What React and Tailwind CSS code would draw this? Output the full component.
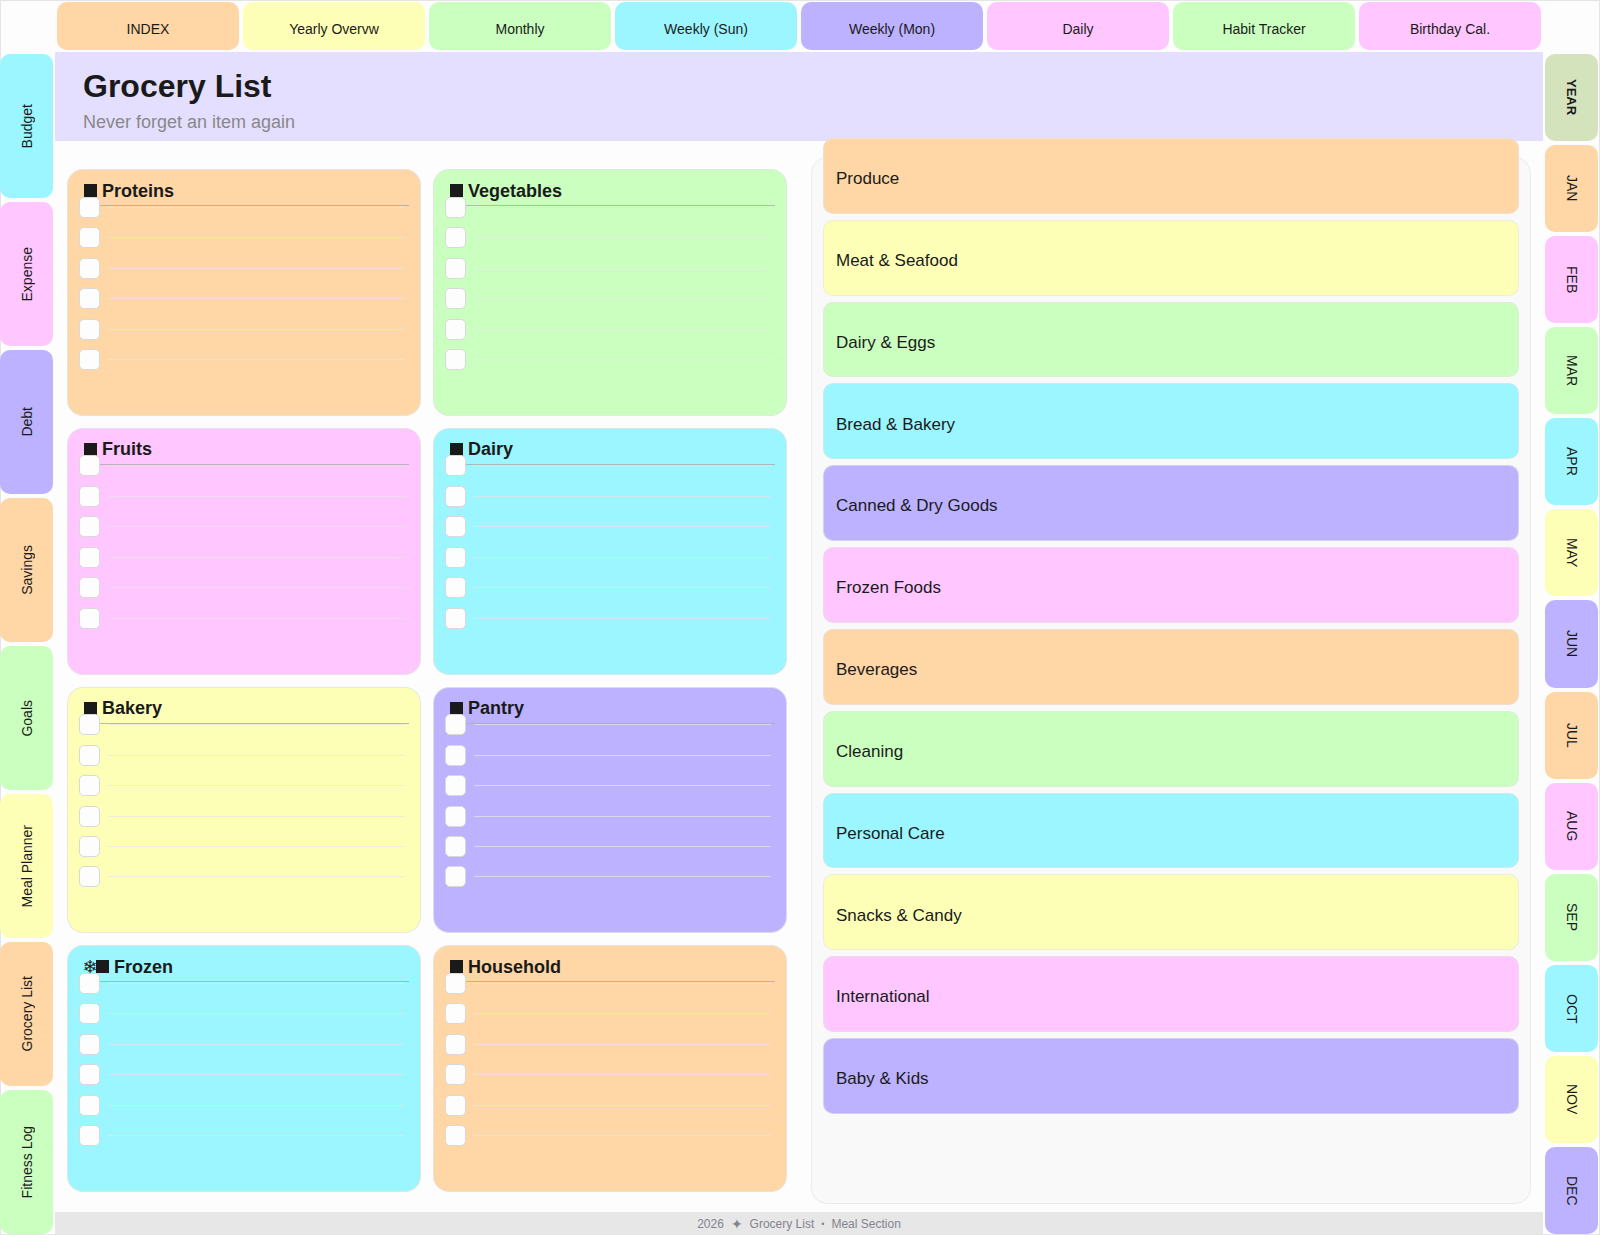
import { useState } from 'react';
import clsx from 'clsx';

const topTabs = [
  { label: 'INDEX', color: 'bg-[#ffd6a5]' },
  { label: 'Yearly Overvw', color: 'bg-[#fdffb6]' },
  { label: 'Monthly', color: 'bg-[#caffbf]' },
  { label: 'Weekly (Sun)', color: 'bg-[#9bf6ff]' },
  { label: 'Weekly (Mon)', color: 'bg-[#bdb2ff]' },
  { label: 'Daily', color: 'bg-[#ffc6ff]' },
  { label: 'Habit Tracker', color: 'bg-[#caffbf]' },
  { label: 'Birthday Cal.', color: 'bg-[#ffc6ff]' },
];

const sectionTabs = [
  { label: 'Budget', color: 'bg-[#9bf6ff]' },
  { label: 'Expense', color: 'bg-[#ffc6ff]' },
  { label: 'Debt', color: 'bg-[#bdb2ff]' },
  { label: 'Savings', color: 'bg-[#ffd6a5]' },
  { label: 'Goals', color: 'bg-[#caffbf]' },
  { label: 'Meal Planner', color: 'bg-[#fdffb6]' },
  { label: 'Grocery List', color: 'bg-[#ffd6a5]' },
  { label: 'Fitness Log', color: 'bg-[#caffbf]' },
];

const monthTabs = [
  { label: 'YEAR', color: 'bg-[#d5e3bd]', bold: true },
  { label: 'JAN', color: 'bg-[#ffd6a5]' },
  { label: 'FEB', color: 'bg-[#ffc6ff]' },
  { label: 'MAR', color: 'bg-[#caffbf]' },
  { label: 'APR', color: 'bg-[#9bf6ff]' },
  { label: 'MAY', color: 'bg-[#fdffb6]' },
  { label: 'JUN', color: 'bg-[#bdb2ff]' },
  { label: 'JUL', color: 'bg-[#ffd6a5]' },
  { label: 'AUG', color: 'bg-[#ffc6ff]' },
  { label: 'SEP', color: 'bg-[#caffbf]' },
  { label: 'OCT', color: 'bg-[#9bf6ff]' },
  { label: 'NOV', color: 'bg-[#fdffb6]' },
  { label: 'DEC', color: 'bg-[#bdb2ff]' },
];

const lists = [
  { name: 'Proteins', color: 'bg-[#ffd6a5]' },
  { name: 'Vegetables', color: 'bg-[#caffbf]' },
  { name: 'Fruits', color: 'bg-[#ffc6ff]' },
  { name: 'Dairy', color: 'bg-[#9bf6ff]' },
  { name: 'Bakery', color: 'bg-[#fdffb6]' },
  { name: 'Pantry', color: 'bg-[#bdb2ff]' },
  { name: 'Frozen', color: 'bg-[#9bf6ff]', icon: '❄' },
  { name: 'Household', color: 'bg-[#ffd6a5]' },
];

const aisles = [
  { name: 'Produce', color: 'bg-[#ffd6a5]' },
  { name: 'Meat & Seafood', color: 'bg-[#fdffb6]' },
  { name: 'Dairy & Eggs', color: 'bg-[#caffbf]' },
  { name: 'Bread & Bakery', color: 'bg-[#9bf6ff]' },
  { name: 'Canned & Dry Goods', color: 'bg-[#bdb2ff]' },
  { name: 'Frozen Foods', color: 'bg-[#ffc6ff]' },
  { name: 'Beverages', color: 'bg-[#ffd6a5]' },
  { name: 'Cleaning', color: 'bg-[#caffbf]' },
  { name: 'Personal Care', color: 'bg-[#9bf6ff]' },
  { name: 'Snacks & Candy', color: 'bg-[#fdffb6]' },
  { name: 'International', color: 'bg-[#ffc6ff]' },
  { name: 'Baby & Kids', color: 'bg-[#bdb2ff]' },
];

const ROWS = [0, 1, 2, 3, 4, 5];

function SideTabs({ tabs, label, flipped }) {
  return (
    <nav aria-label={label} className="flex w-[53px] shrink-0 flex-col gap-1 pt-0.5">
      {tabs.map((tab) => (
        <a
          key={tab.label}
          href="#"
          className={clsx('flex flex-1 items-center justify-center rounded-[10px]', tab.color)}
        >
          <span
            className={clsx(
              '[writing-mode:vertical-rl]',
              flipped && 'rotate-180',
              tab.bold ? 'text-[13px] font-bold' : 'text-sm'
            )}
          >
            {tab.label}
          </span>
        </a>
      ))}
    </nav>
  );
}

function ListCard({ name, color, icon }) {
  const [checked, setChecked] = useState({});

  return (
    <section className={clsx('flex flex-col rounded-2xl border border-[#e5e5e5]/80 pb-10', color)}>
      <h2 className="ml-4 mr-[11px] flex h-9 items-center border-b border-[#aaa]/80 pt-1.5 text-lg font-bold">
        {icon && (
          <span aria-hidden="true" className="flex w-3 justify-center font-['DejaVu_Sans'] text-lg font-normal">
            {icon}
          </span>
        )}
        <span aria-hidden="true" className="mr-[5px] size-[13px] bg-[#1a1a1a]" />
        {name}
      </h2>
      <ul className="-mt-3.5 flex flex-1 flex-col">
        {ROWS.map((row) => (
          <li key={row} className="flex flex-1 items-center gap-2 pl-[11px] pr-[15px]">
            <input
              type="checkbox"
              aria-label={`${name} item ${row + 1}`}
              checked={!!checked[row]}
              onChange={(e) => setChecked({ ...checked, [row]: e.target.checked })}
              className="size-[21px] shrink-0 appearance-none rounded-[5px] border border-[#d9d9d9] bg-[#fdfdfd] checked:bg-[#1a1a1a]"
            />
            <span className="h-px flex-1 bg-[#e5e5e5]/70" />
          </li>
        ))}
      </ul>
    </section>
  );
}

export default function App() {
  return (
    <div className="flex min-h-screen flex-col border border-[#e5e5e5] bg-[#fdfdfd] font-['Liberation_Sans',Arial,sans-serif] text-[#1a1a1a]">
      <nav aria-label="Views" className="flex gap-1 pb-0.5 pl-14 pr-[58px] pt-px">
        {topTabs.map((tab) => (
          <a
            key={tab.label}
            href="#"
            className={clsx('flex h-12 flex-1 items-center justify-center rounded-[10px] pt-1.5 text-sm', tab.color)}
          >
            {tab.label}
          </a>
        ))}
      </nav>

      <div className="-ml-px flex flex-1 gap-0.5 pr-px">
        <SideTabs tabs={sectionTabs} label="Sections" flipped />

        <div className="flex flex-1 flex-col">
          <header className="bg-[#e5dfff] pb-1 pl-7 pt-3">
            <h1 className="text-[32px] leading-[44px] font-bold">Grocery List</h1>
            <p className="text-lg leading-[29px] text-[#888]">Never forget an item again</p>
          </header>

          <main className="grid flex-1 grid-cols-2 gap-6 px-3 pb-2 pt-4">
            <div className="grid grid-cols-2 grid-rows-4 gap-3 py-3">
              {lists.map((list) => (
                <ListCard key={list.name} {...list} />
              ))}
            </div>

            <section
              aria-label="Aisles"
              className="flex flex-col rounded-2xl border border-[#ebebeb] bg-[#f9f9f9] px-[11px] pb-[89px]"
            >
              <ul className="-mt-5 flex flex-1 flex-col gap-1.5">
                {aisles.map((aisle) => (
                  <li
                    key={aisle.name}
                    className={clsx(
                      'flex flex-1 items-center rounded-[10px] border border-[#e5e5e5]/60 pl-3 pt-1.5 text-[17px]',
                      aisle.color
                    )}
                  >
                    {aisle.name}
                  </li>
                ))}
              </ul>
            </section>
          </main>

          <footer className="flex h-[22px] items-center justify-center gap-[7px] bg-[#e7e7e7] pt-0.5 text-xs text-[#85828f]">
            <span>2026</span>
            <span className="font-['DejaVu_Sans'] text-sm">✦</span>
            <span>Grocery List</span>
            <span className="text-[9px]">•</span>
            <span>Meal Section</span>
          </footer>
        </div>

        <SideTabs tabs={monthTabs} label="Months" />
      </div>
    </div>
  );
}
